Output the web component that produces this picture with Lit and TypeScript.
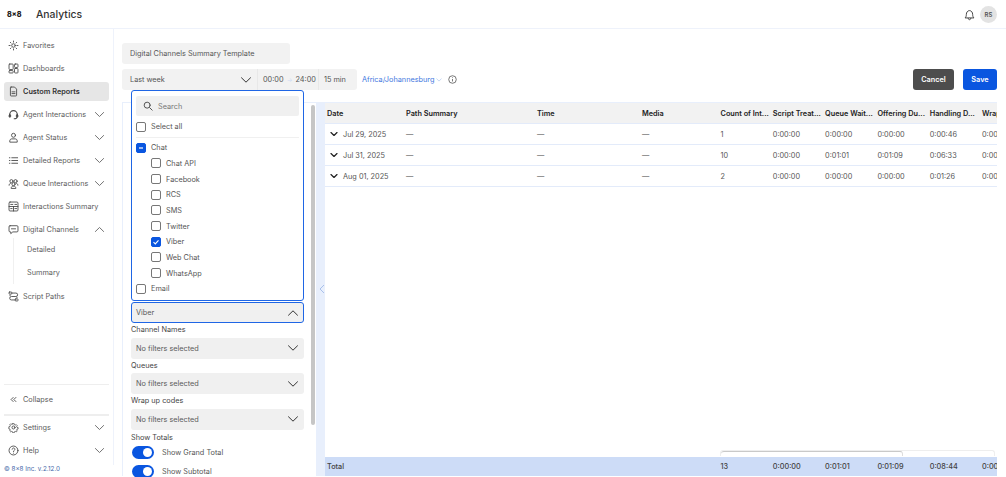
import { LitElement, html, css, svg } from 'lit';
import { customElement } from 'lit/decorators.js';

const icon = (body: unknown, size = 11) => html`<svg class="ico" width=${size} height=${size} viewBox="0 0 16 16" fill="none" stroke="currentColor" stroke-width="1.3" stroke-linecap="round" stroke-linejoin="round">${body}</svg>`;

const ICONS: Record<string, unknown> = {
  favorites: svg`<circle cx="8" cy="8" r="2.6"/><path d="M8 1.5v1.6M8 12.9v1.6M1.5 8h1.6M12.9 8h1.6M3.4 3.4l1 1M11.6 11.6l1 1M12.6 3.4l-1 1M4.4 11.6l-1 1"/>`,
  dashboards: svg`<rect x="1.5" y="1.5" width="6" height="8" rx="1"/><rect x="9.5" y="1.5" width="5" height="5" rx="1"/><rect x="1.5" y="11" width="6" height="3.5" rx="1"/><rect x="9.5" y="8" width="5" height="6.5" rx="1"/>`,
  doc: svg`<path d="M4.5 1.5h5l3 3v9a1 1 0 0 1-1 1h-7a1 1 0 0 1-1-1v-11a1 1 0 0 1 1-1z"/><path d="M5.8 8.5h4.4M5.8 11h4.4"/>`,
  headset: svg`<path d="M2.5 10V8a5.5 5.5 0 0 1 11 0v2" stroke-width="1.8"/><rect x="1.6" y="8.4" width="2.2" height="3.6" rx="1" fill="currentColor"/><rect x="12.2" y="8.4" width="2.2" height="3.6" rx="1" fill="currentColor"/><path d="M13 12c0 1.5-1.5 2.3-4 2.3" stroke-width="1.5"/>`,
  person: svg`<circle cx="8" cy="4.8" r="2.9"/><path d="M2.6 14.2v-1.4c0-1.7 1.4-2.8 3-2.8h4.8c1.6 0 3 1.1 3 2.8v1.4z"/>`,
  list: svg`<path d="M5.5 4h8.5M5.5 8h8.5M5.5 12h8.5M2 4h.8M2 8h.8M2 12h.8"/>`,
  group: svg`<circle cx="5" cy="4.6" r="2.3"/><circle cx="11" cy="4.6" r="2.3"/><circle cx="8" cy="9" r="2.3"/><path d="M1.6 10.5c0-1.6 1-2.6 2.4-2.9M14.4 10.5c0-1.6-1-2.6-2.4-2.9M4.6 14.6c0-1.8 1.4-2.9 3.4-2.9s3.4 1.1 3.4 2.9z"/>`,
  summary: svg`<rect x="1.5" y="1.5" width="13" height="13" rx="1.5"/><path d="M1.5 8h13M8 8v6.5M4 5h3M10 5h2.5M4 11h2M10 11h2.5"/>`,
  chat: svg`<path d="M3 2.5h10a1.5 1.5 0 0 1 1.5 1.5v6a1.5 1.5 0 0 1-1.5 1.5H7l-3 2.5v-2.5H3A1.5 1.5 0 0 1 1.5 10V4A1.5 1.5 0 0 1 3 2.5z"/><path d="M5 7h6"/>`,
  script: svg`<rect x="1.5" y="1.5" width="4" height="3" rx=".8"/><rect x="10.5" y="11.5" width="4" height="3" rx=".8"/><path d="M5.5 3h6a2 2 0 0 1 0 5H5a2 2 0 0 0 0 5h5.5M3 6v1M13 9v1"/>`,
  collapse: svg`<path d="M7.5 5L4.5 8l3 3M11.5 5l-3 3 3 3"/>`,
  settings: svg`<circle cx="8" cy="8" r="2.2"/><path d="M6.8 1.5h2.4l.4 1.9 1.4.6 1.6-1 1.7 1.7-1 1.6.6 1.4 1.9.4v2.4l-1.9.4-.6 1.4 1 1.6-1.7 1.7-1.6-1-1.4.6-.4 1.9H6.8l-.4-1.9-1.4-.6-1.6 1-1.7-1.7 1-1.6-.6-1.4-1.9-.4V6.8l1.9-.4.6-1.4-1-1.6 1.7-1.7 1.6 1 1.4-.6z" transform="translate(1.1 1.1) scale(.86)"/>`,
  help: svg`<circle cx="8" cy="8" r="6.5"/><path d="M6 6.2a2 2 0 1 1 3 1.8c-.7.4-1 .8-1 1.6M8 11.8v.1"/>`,
};

const chevron = (up = false, size = 11, weight = 1) => html`<svg class="chev" width=${size} height=${size} viewBox="0 0 12 12" fill="none" stroke="currentColor" stroke-width=${weight} stroke-linecap="round" stroke-linejoin="round"><path d=${up ? 'M1.5 8.2L6 3.8l4.5 4.4' : 'M1.5 3.8L6 8.2l4.5-4.4'}/></svg>`;

const NAV = [
  { label: 'Favorites', icon: 'favorites' },
  { label: 'Dashboards', icon: 'dashboards' },
  { label: 'Custom Reports', icon: 'doc', active: true },
  { label: 'Agent Interactions', icon: 'headset', chev: 'down' },
  { label: 'Agent Status', icon: 'person', chev: 'down' },
  { label: 'Detailed Reports', icon: 'list', chev: 'down' },
  { label: 'Queue Interactions', icon: 'group', chev: 'down' },
  { label: 'Interactions Summary', icon: 'summary' },
  { label: 'Digital Channels', icon: 'chat', chev: 'up' },
];

const CHANNELS = ['Chat API', 'Facebook', 'RCS', 'SMS', 'Twitter', 'Viber', 'Web Chat', 'WhatsApp'];

const COLUMNS = ['Date', 'Path Summary', 'Time', 'Media', 'Count of Int...', 'Script Treat...', 'Queue Wait...', 'Offering Du...', 'Handling D...', 'Wrap up'];

const ROWS = [
  ['Jul 29, 2025', '1', '0:00:00', '0:00:00', '0:00:00', '0:00:46'],
  ['Jul 31, 2025', '10', '0:00:00', '0:01:01', '0:01:09', '0:06:33'],
  ['Aug 01, 2025', '2', '0:00:00', '0:00:00', '0:00:00', '0:01:26'],
];

@customElement('app-root')
export class AppRoot extends LitElement {
  static styles = css`
    :host {
      display: block;
      width: 1006px;
      height: 477px;
      overflow: hidden;
      background: #fff;
      font-family: Inter, 'Liberation Sans', sans-serif;
      font-size: 7.3px;
      color: #555;
    }
    svg { display: block; flex: none; }

    .topbar {
      display: flex;
      align-items: center;
      height: 28px;
      padding: 0 9px 0 7px;
      border-bottom: 1px solid #eef2fb;
    }
    .logo { font-size: 7.2px; font-weight: 800; color: #222; width: 29px; }
    .app-name { font-size: 10.4px; font-weight: 500; color: #333; flex: 1; }
    .bell { color: #333; margin-right: 4px; }
    .avatar {
      width: 17px;
      height: 17px;
      border-radius: 50%;
      background: #e3e3e3;
      color: #555;
      font-size: 6px;
      font-weight: 600;
      display: flex;
      align-items: center;
      justify-content: center;
    }

    .shell { display: flex; height: 448px; }
    aside { width: 114px; flex: none; display: flex; flex-direction: column; }
    .nav {
      flex: 1;
      display: flex;
      flex-direction: column;
      padding: 7px 4px 0;
      border-right: 1px solid #eef2fb;
      min-height: 0;
    }
    .item {
      display: flex;
      align-items: center;
      height: 18.5px;
      margin-bottom: 4.5px;
      padding: 0 4px 0 4px;
      border-radius: 3px;
      color: #5c5c5c;
      white-space: nowrap;
    }
    .item .ico { margin-right: 4px; color: #4a4a4a; }
    .item .chev { margin-left: auto; color: #666; }
    .item.active { background: #e6e6e6; color: #333; font-weight: 600; }
    .sub {
      margin: -5px 0 3px 9px;
      padding-left: 13px;
      border-left: 1px solid #f0f0f0;
    }
    .sub div { height: 23px; line-height: 23px; color: #5c5c5c; }
    .bottom { margin-top: auto; }
    .rule { border-top: 1px solid #eee; margin-bottom: 5.5px; }
    .rule.thick { border-top-width: 2px; margin-bottom: 3px; }
    .bottom .item:last-child { margin-bottom: 5px; }
    .version {
      font-size: 6.3px;
      color: #3f66a8;
      padding: 1px 0 4px 4px;
      height: 12px;
      box-sizing: border-box;
      line-height: 7px;
    }

    main {
      flex: 1;
      min-width: 0;
      padding: 14px 9px 1px 8px;
      display: flex;
      flex-direction: column;
    }
    .title {
      width: 168px;
      height: 21px;
      box-sizing: border-box;
      background: #f2f2f2;
      border-radius: 3px;
      padding-left: 8px;
      line-height: 21px;
      margin-bottom: 5px;
    }
    .toolbar { display: flex; align-items: center; height: 21px; margin-bottom: 12px; }
    .range {
      display: flex;
      align-items: center;
      width: 235px;
      height: 21px;
      background: #f2f2f2;
      border-radius: 3px;
      color: #555;
    }
    .range > div { display: flex; align-items: center; height: 100%; box-sizing: border-box; }
    .period { width: 136px; padding: 0 5px 0 8px; justify-content: space-between; border-right: 1px solid #e8e8e8; }
    .period .chev { color: #333; }
    .times { width: 61px; padding-left: 5px; border-right: 1px solid #e8e8e8; }
    .times .to { color: #cfdcf5; width: 12px; text-align: center; font-size: 6px; }
    .step { padding-left: 5px; }
    .zone { color: #3f78e0; margin-left: 5px; display: flex; align-items: center; gap: 2px; }
    .zone .chev { color: #8aaee8; }
    .info { margin-left: 6px; color: #444; }
    .actions { margin-left: auto; display: flex; gap: 9px; }
    .btn {
      height: 21px;
      border-radius: 3px;
      color: #fff;
      font-weight: 600;
      display: flex;
      align-items: center;
      justify-content: center;
    }
    .cancel { width: 41px; background: #4d4d4d; }
    .save { width: 34px; background: #0a56e0; }

    .panels { flex: 1; min-height: 0; display: flex; }
    .filters {
      position: relative;
      width: 194px;
      flex: none;
      box-sizing: border-box;
      padding-left: 8px;
      border-left: 1px solid #e8effc;
      border-top: 1px solid #e8effc;
    }
    .scroll {
      position: absolute;
      left: 188px;
      top: 2px;
      width: 3.5px;
      height: 320px;
      border-radius: 2px;
      background: #c6c6c6;
    }
    .pop {
      position: relative;
      width: 173px;
      height: 211px;
      box-sizing: border-box;
      margin-top: -13px;
      background: #fff;
      border: 1px solid #1f66e5;
      border-radius: 3px;
      padding: 5px 4px 0 4px;
    }
    .search {
      height: 20px;
      background: #f0f0f0;
      border-radius: 2px;
      display: flex;
      align-items: center;
      padding-left: 7px;
      gap: 5px;
      color: #777;
    }
    .search .ico { color: #555; }
    .opt { display: flex; align-items: center; height: 15.67px; gap: 5px; color: #555; }
    .opt.child { padding-left: 15px; }
    .opt.all { margin-top: 3px; height: 15px; padding-bottom: 3px; border-bottom: 1px solid #f0f0f0; margin-bottom: 2px; }
    .box {
      width: 10px;
      height: 10px;
      box-sizing: border-box;
      border: 1px solid #777;
      border-radius: 2px;
      display: flex;
      align-items: center;
      justify-content: center;
      flex: none;
    }
    .box.on { background: #0a56e0; border-color: #0a56e0; }
    .select {
      width: 173px;
      height: 21px;
      box-sizing: border-box;
      background: #f0f0f0;
      border-radius: 3px;
      padding: 0 5px;
      display: flex;
      align-items: center;
      justify-content: space-between;
      color: #5c5c5c;
    }
    .select .chev { color: #333; }
    .select.open { border: 1px solid #1f66e5; margin-top: 1px; padding: 0 4px; }
    .label { color: #444; height: 14.6px; line-height: 14.6px; }
    .totals { margin-top: 1px; }
    .toggle { display: flex; align-items: center; gap: 8px; height: 13px; margin: 1px 0 6px 1px; color: #555; }
    .switch {
      width: 22px;
      height: 13px;
      border-radius: 7px;
      background: #0a56e0;
      display: flex;
      align-items: center;
      justify-content: flex-end;
      padding-right: 2px;
      box-sizing: border-box;
    }
    .switch i { width: 9px; height: 9px; border-radius: 50%; background: #fff; display: block; }

    .handle {
      width: 9px;
      flex: none;
      background: #e8effc;
      display: flex;
      align-items: center;
      justify-content: flex-end;
      color: #a9c0ea;
    }
    .table {
      flex: 1;
      min-width: 0;
      display: flex;
      flex-direction: column;
      overflow: hidden;
      border-top: 1px solid #e8effc;
    }
    .row {
      display: grid;
      grid-template-columns: 79px 131px 105px 78.5px 52.3px 52.3px 52.3px 52.3px 52.3px 60px;
      height: 21px;
      align-items: center;
      box-sizing: border-box;
      border-bottom: 1px solid #e3ebfa;
      white-space: nowrap;
    }
    .row > div { padding-left: 2px; overflow: hidden; }
    .row.head { background: #f2f2f2; color: #222; font-weight: 600; }
    .date { display: flex; align-items: center; gap: 5px; padding-left: 5px !important; }
    .date .chev { color: #222; }
    .track {
      margin: auto 2px 1px 395px;
      height: 6px;
      box-sizing: border-box;
      border: 1px solid #eee;
      border-bottom: none;
      border-radius: 3px 3px 0 0;
    }
    .track i {
      display: block;
      width: 182px;
      height: 5px;
      box-sizing: border-box;
      border-top: 1px solid #c9c9c9;
      border-right: 1px solid #ddd;
      border-radius: 3px 3px 0 0;
    }
    .row.total { background: #cddcf7; height: 19px; border: none; color: #444; font-weight: 500; flex: none; }
  `;

  private navItem(n: { label: string; icon: string; chev?: string; active?: boolean }) {
    return html`<div class="item ${n.active ? 'active' : ''}">
      ${icon(ICONS[n.icon])}<span>${n.label}</span>
      ${n.chev ? chevron(n.chev === 'up') : ''}
    </div>`;
  }

  private option(label: string, state = '', cls = '') {
    return html`<div class="opt ${cls}">
      <span class="box ${state ? 'on' : ''}">
        ${state === 'check' ? html`<svg width="8" height="8" viewBox="0 0 8 8" fill="none" stroke="#fff" stroke-width="1.1"><path d="M1.5 4.2l1.8 1.7 3.2-3.6"/></svg>` : ''}
        ${state === 'minus' ? html`<svg width="8" height="8" viewBox="0 0 8 8" fill="none" stroke="#fff" stroke-width="1.2"><path d="M2 4h4"/></svg>` : ''}
      </span>${label}
    </div>`;
  }

  private filter(label: string) {
    return html`<div class="label">${label}</div>
      <div class="select"><span>No filters selected</span>${chevron(false, 12)}</div>`;
  }

  protected render() {
    return html`
      <header class="topbar">
        <div class="logo">8x8</div>
        <div class="app-name">Analytics</div>
        <svg class="bell" width="13" height="13" viewBox="0 0 16 16" fill="none" stroke="currentColor" stroke-width="1.1" stroke-linejoin="round"><path d="M2.5 12.2c1-1 1.6-2 1.6-4.2 0-2.6 1.6-4.8 3.9-4.8s3.9 2.2 3.9 4.8c0 2.2.6 3.2 1.6 4.2z"/><path d="M6.4 12.4c0 1.2.7 2 1.6 2s1.6-.8 1.6-2"/></svg>
        <div class="avatar">RS</div>
      </header>
      <div class="shell">
        <aside>
          <nav class="nav">
            ${NAV.map((n) => this.navItem(n))}
            <div class="sub"><div>Detailed</div><div>Summary</div></div>
            ${this.navItem({ label: 'Script Paths', icon: 'script' })}
            <div class="bottom">
              <div class="rule"></div>
              ${this.navItem({ label: 'Collapse', icon: 'collapse' })}
              <div class="rule thick"></div>
              ${this.navItem({ label: 'Settings', icon: 'settings', chev: 'down' })}
              ${this.navItem({ label: 'Help', icon: 'help', chev: 'down' })}
            </div>
          </nav>
          <div class="version">© 8x8 Inc. v.2.12.0</div>
        </aside>
        <main>
          <div class="title">Digital Channels Summary Template</div>
          <div class="toolbar">
            <div class="range">
              <div class="period"><span>Last week</span>${chevron(false, 12)}</div>
              <div class="times">00:00<span class="to">→</span>24:00</div>
              <div class="step">15 min</div>
            </div>
            <div class="zone"><span>Africa/Johannesburg</span>${chevron(false, 6)}</div>
            <svg class="info" width="9" height="9" viewBox="0 0 10 10" fill="none" stroke="currentColor" stroke-width=".8"><circle cx="5" cy="5" r="4.2"/><path d="M5 4.4v2.8M5 2.6v.8"/></svg>
            <div class="actions">
              <div class="btn cancel">Cancel</div>
              <div class="btn save">Save</div>
            </div>
          </div>
          <div class="panels">
            <section class="filters">
              <div class="scroll"></div>
              <div class="pop">
                <div class="search">
                  <svg class="ico" width="10" height="10" viewBox="0 0 12 12" fill="none" stroke="currentColor" stroke-width="1.2" stroke-linecap="round"><circle cx="5" cy="5" r="3.6"/><path d="M8 8l3 3"/></svg>
                  Search
                </div>
                ${this.option('Select all', '', 'all')}
                ${this.option('Chat', 'minus')}
                ${CHANNELS.map((c) => this.option(c, c === 'Viber' ? 'check' : '', 'child'))}
                ${this.option('Email')}
              </div>
              <div class="select open"><span>Viber</span>${chevron(true, 12)}</div>
              ${this.filter('Channel Names')}
              ${this.filter('Queues')}
              ${this.filter('Wrap up codes')}
              <div class="label totals">Show Totals</div>
              <div class="toggle"><span class="switch"><i></i></span>Show Grand Total</div>
              <div class="toggle"><span class="switch"><i></i></span>Show Subtotal</div>
            </section>
            <div class="handle">
              <svg width="6" height="10" viewBox="0 0 6 10" fill="none" stroke="currentColor" stroke-width="1"><path d="M5 1L1 5l4 4"/></svg>
            </div>
            <section class="table">
              <div class="row head">${COLUMNS.map((c) => html`<div>${c}</div>`)}</div>
              ${ROWS.map(
                ([date, count, script, queue, offering, handling]) => html`<div class="row">
                  <div class="date">${chevron(false, 8, 1.8)}${date}</div>
                  <div>—</div><div>—</div><div>—</div>
                  <div>${count}</div><div>${script}</div><div>${queue}</div><div>${offering}</div><div>${handling}</div><div>0:00:00</div>
                </div>`,
              )}
              <div class="track"><i></i></div>
              <div class="row total">
                <div>Total</div><div></div><div></div><div></div>
                <div>13</div><div>0:00:00</div><div>0:01:01</div><div>0:01:09</div><div>0:08:44</div><div>0:00:00</div>
              </div>
            </section>
          </div>
        </main>
      </div>
    `;
  }
}
